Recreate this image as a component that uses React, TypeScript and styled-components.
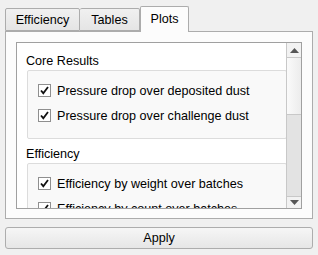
import React from 'react';
import styled, { createGlobalStyle } from 'styled-components';

const GlobalStyle = createGlobalStyle`
  html, body {
    margin: 0;
    padding: 0;
    background: #f0f0f0;
  }
  body {
    font-family: 'Liberation Sans', Arial, sans-serif;
    font-size: 12.6px;
    color: #000;
  }
`;

const Window = styled.div`
  width: 318px;
  height: 255px;
  box-sizing: border-box;
  padding: 5px 5px 0 5px;
  display: flex;
  flex-direction: column;
`;

const TabBar = styled.div`
  display: flex;
  align-items: flex-end;
  height: 26px;
  position: relative;
  z-index: 1;
`;

interface TabProps {
  active?: boolean;
  first?: boolean;
  width: number;
}

const Tab = styled.div<TabProps>`
  box-sizing: border-box;
  width: ${(p) => p.width}px;
  height: ${(p) => (p.active ? 26 : 23)}px;
  margin-bottom: ${(p) => (p.active ? -1 : 0)}px;
  border: 1px solid #acacac;
  border-bottom: ${(p) => (p.active ? 'none' : '1px solid #acacac')};
  border-left: ${(p) => (p.first || p.active ? '1px solid #acacac' : 'none')};
  border-radius: 2px 2px 0 0;
  background: ${(p) => (p.active ? '#fcfcfc' : 'linear-gradient(#f0f0f0, #e5e5e5)')};
  display: flex;
  align-items: center;
  justify-content: center;
  padding-bottom: ${(p) => (p.active ? 1 : 0)}px;
`;

const Pane = styled.div`
  box-sizing: border-box;
  height: 188px;
  border: 1px solid #acacac;
  background: #fcfcfc;
  padding: 10px 10px 9px 10px;
  display: flex;
`;

const ScrollArea = styled.div`
  flex: 1;
  border: 1px solid #a0a0a0;
  background: #fff;
  display: flex;
  overflow: hidden;
`;

const Viewport = styled.div`
  flex: 1;
  overflow: hidden;
  padding: 10px 0 0 9px;
`;

const GroupTitle = styled.div<{ first?: boolean }>`
  height: 16px;
  line-height: 16px;
  margin-top: ${(p) => (p.first ? 0 : 7)}px;
  margin-bottom: 1px;
`;

const Frame = styled.div`
  margin-left: 1px;
  margin-right: -1px;
  border: 1px solid #dcdcdc;
  border-radius: 2px;
  background: #f9f9f9;
  padding: 7px 0 10px 10px;
`;

const Row = styled.label`
  display: flex;
  align-items: center;
  height: 25px;
  gap: 6px;
  white-space: nowrap;
`;

const Box = styled.span`
  box-sizing: border-box;
  width: 13px;
  height: 13px;
  border: 1px solid #8f8f8f;
  background: #fff;
  display: flex;
  align-items: center;
  justify-content: center;
  flex-shrink: 0;
`;

const ScrollBar = styled.div`
  width: 14px;
  border-left: 1px solid #c8c8c8;
  background: #e3e3e3;
  display: flex;
  flex-direction: column;
`;

const ArrowButton = styled.div<{ down?: boolean }>`
  height: ${(p) => (p.down ? 11 : 14)}px;
  background: #f2f2f2;
  border-bottom: ${(p) => (p.down ? 'none' : '1px solid #c8c8c8')};
  border-top: ${(p) => (p.down ? '1px solid #c8c8c8' : 'none')};
  display: flex;
  align-items: center;
  justify-content: center;
`;

const Thumb = styled.div`
  height: 56px;
  border-bottom: 1px solid #c8c8c8;
  background: linear-gradient(90deg, #fafafa, #ececec);
`;

const Track = styled.div`
  flex: 1;
`;

const ApplyButton = styled.button`
  margin-top: 8px;
  height: 22px;
  border: 1px solid #adadad;
  border-radius: 3px;
  background: linear-gradient(#f6f6f6, #e6e6e6);
  font-family: inherit;
  font-size: inherit;
  color: #000;
  padding: 0;
`;

const Check = () => (
  <svg width="11" height="11" viewBox="0 0 11 11">
    <path d="M2 5.5 L4.3 8.2 L9 2" fill="none" stroke="#111" strokeWidth="1.8" />
  </svg>
);

const Arrow = ({ down }: { down?: boolean }) => (
  <svg width="9" height="5" viewBox="0 0 9 5">
    <path d={down ? 'M0 0 H9 L4.5 5 Z' : 'M0 5 H9 L4.5 0 Z'} fill="#555" />
  </svg>
);

const CheckRow = ({ text }: { text: string }) => (
  <Row>
    <Box>
      <Check />
    </Box>
    {text}
  </Row>
);

export default function App() {
  return (
    <>
      <GlobalStyle />
      <Window>
        <TabBar>
          <Tab width={75} first>Efficiency</Tab>
          <Tab width={60}>Tables</Tab>
          <Tab width={49} active>Plots</Tab>
        </TabBar>
        <Pane>
          <ScrollArea>
            <Viewport>
              <GroupTitle first>Core Results</GroupTitle>
              <Frame>
                <CheckRow text="Pressure drop over deposited dust" />
                <CheckRow text="Pressure drop over challenge dust" />
              </Frame>
              <GroupTitle>Efficiency</GroupTitle>
              <Frame>
                <CheckRow text="Efficiency by weight over batches" />
                <CheckRow text="Efficiency by count over batches" />
              </Frame>
            </Viewport>
            <ScrollBar>
              <ArrowButton>
                <Arrow />
              </ArrowButton>
              <Thumb />
              <Track />
              <ArrowButton down>
                <Arrow down />
              </ArrowButton>
            </ScrollBar>
          </ScrollArea>
        </Pane>
        <ApplyButton>Apply</ApplyButton>
      </Window>
    </>
  );
}
